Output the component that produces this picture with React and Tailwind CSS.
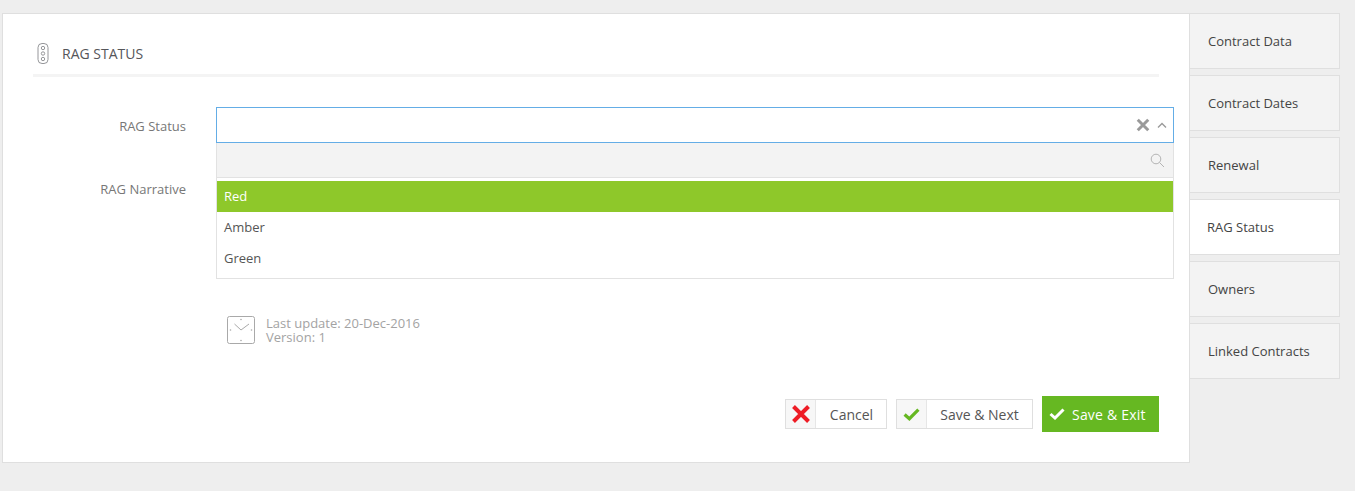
import React from "react";

const font = "font-['Open_Sans',sans-serif]";

const tabs = ["Contract Data", "Contract Dates", "Renewal", "RAG Status", "Owners", "Linked Contracts"];

const TrafficLight = () => (
  <svg width="12" height="21" viewBox="0 0 12 21" fill="none" stroke="#8a8b8e" strokeWidth="0.9">
    <rect x="1" y="0.5" width="10" height="20" rx="4" />
    <circle cx="6" cy="5" r="1.7" />
    <circle cx="6" cy="10.5" r="1.7" />
    <circle cx="6" cy="16" r="1.7" />
  </svg>
);

const ClockBox = () => (
  <svg width="30" height="30" viewBox="0 0 30 30" fill="none" stroke="#a9a9a9">
    <rect x="1.5" y="1.5" width="27" height="27" rx="2" strokeWidth="1" />
    <path d="M8.5 9l6.5 6 8-6" strokeWidth="1" />
    <circle cx="15" cy="4.5" r="0.8" fill="#a9a9a9" stroke="none" />
    <circle cx="15" cy="25.5" r="0.8" fill="#a9a9a9" stroke="none" />
    <circle cx="4.5" cy="15" r="0.8" fill="#a9a9a9" stroke="none" />
    <circle cx="25.5" cy="15" r="0.8" fill="#a9a9a9" stroke="none" />
  </svg>
);

const Cross = ({ size, color, width }) => (
  <svg width={size} height={size} viewBox="0 0 16 16" fill="none" stroke={color} strokeWidth={width}>
    <path d="M2 2l12 12M14 2L2 14" />
  </svg>
);

const Check = ({ color, w, h }) => (
  <svg width={w} height={h} viewBox="0 0 16 12" fill="none" stroke={color} strokeWidth="3">
    <path d="M1.5 6l4.5 4L14.5 1.5" />
  </svg>
);

const Tab = ({ label, active }) => (
  <div
    className={`h-[56px] flex items-center pt-[2px] border border-l-0 border-[#dfdfdf] text-[13px] text-[#444] ${
      active ? "bg-white pl-[17px]" : "bg-[#f3f3f3] pl-[18px]"
    }`}
  >
    {label}
  </div>
);

const Dropdown = () => (
  <div className="absolute -left-px -right-px top-[35px] h-[136px] bg-white border border-t-0 border-[#e2e2e2] z-10">
    <div className="h-[35px] bg-[#f3f3f3] border-b border-[#e2e2e2] flex items-center justify-end pr-[8px]">
      <svg width="15" height="15" viewBox="0 0 15 15" fill="none" stroke="#b4b4b4" strokeWidth="1">
        <circle cx="6" cy="6" r="4.8" />
        <path d="M9.5 9.5l4.5 4.5" />
      </svg>
    </div>
    <div className="pt-[3px] text-[13px] text-[#555]">
      <div className="h-[31px] flex items-center pl-[7px] bg-[#8ec82a] text-white">Red</div>
      <div className="h-[31px] flex items-center pl-[7px]">Amber</div>
      <div className="h-[31px] flex items-center pl-[7px]">Green</div>
    </div>
  </div>
);

export default function App() {
  return (
    <div className={`${font} h-[491px] bg-[#eeeeee] pt-[13px] pl-[2px] flex items-start overflow-hidden`}>
      <div className="w-[1188px] h-[450px] bg-white border border-[#dfdfdf] pl-[30px] pr-[30px] flex flex-col">
        <div className="h-[63px] shrink-0 border-b-[3px] border-[#f4f4f4] flex items-center pl-[4px] pt-[19px] gap-[13px]">
          <TrafficLight />
          <span className="text-[14px] text-[#55565a]">RAG STATUS</span>
        </div>

        <div className="mt-[30px] flex">
          <label className="w-[153px] shrink-0 text-right text-[13px] text-[#777] pt-[10px]">RAG Status</label>
          <div className="relative ml-[30px] w-[958px] shrink-0 h-[36px] border border-[#64ade6] flex items-center justify-end pr-[6px] gap-[7px] bg-white">
            <Cross size={14} color="#9a9a9a" width={3.4} />
            <svg width="10" height="6" viewBox="0 0 10 6" fill="none" stroke="#9a9a9a" strokeWidth="1.4">
              <path d="M1 5.5L5 1.5l4 4" />
            </svg>
            <Dropdown />
          </div>
        </div>

        <div className="mt-[27px] h-[124px] flex">
          <label className="w-[153px] shrink-0 text-right text-[13px] text-[#777] pt-[10px]">RAG Narrative</label>
        </div>

        <div className="mt-[21px] ml-[193px] flex items-center gap-[10px]">
          <ClockBox />
          <div className="text-[13px] leading-[14px] text-[#a3a3a3]">
            <div>Last update: 20-Dec-2016</div>
            <div>Version: 1</div>
          </div>
        </div>

        <div className="mt-[51px] flex justify-end items-start">
          <button className="mt-[3px] h-[30px] w-[102px] border border-[#dfdfdf] flex items-center text-[14px] text-[#555] bg-white">
            <span className="w-[30px] h-full bg-[#f7f7f7] border-r border-[#e6e6e6] flex items-center justify-center">
              <Cross size={20} color="#ee1c25" width={3.2} />
            </span>
            <span className="flex-1 text-center pl-[1px]">Cancel</span>
          </button>
          <button className="ml-[9px] mt-[3px] h-[30px] w-[137px] border border-[#dfdfdf] flex items-center text-[14px] text-[#555] bg-white">
            <span className="w-[30px] h-full bg-[#f7f7f7] border-r border-[#e6e6e6] flex items-center justify-center">
              <Check color="#66b822" w={17} h={13} />
            </span>
            <span className="flex-1 text-center">Save & Next</span>
          </button>
          <button className="ml-[9px] h-[36px] w-[117px] bg-[#66b822] text-white text-[14px] tracking-[0.2px] flex items-center pl-[7px] gap-[7px]">
            <Check color="#ffffff" w={16} h={12} />
            <span>Save & Exit</span>
          </button>
        </div>
      </div>

      <div className="w-[150px] flex flex-col gap-[6px]">
        {tabs.map((t) => (
          <Tab key={t} label={t} active={t === "RAG Status"} />
        ))}
      </div>
    </div>
  );
}
